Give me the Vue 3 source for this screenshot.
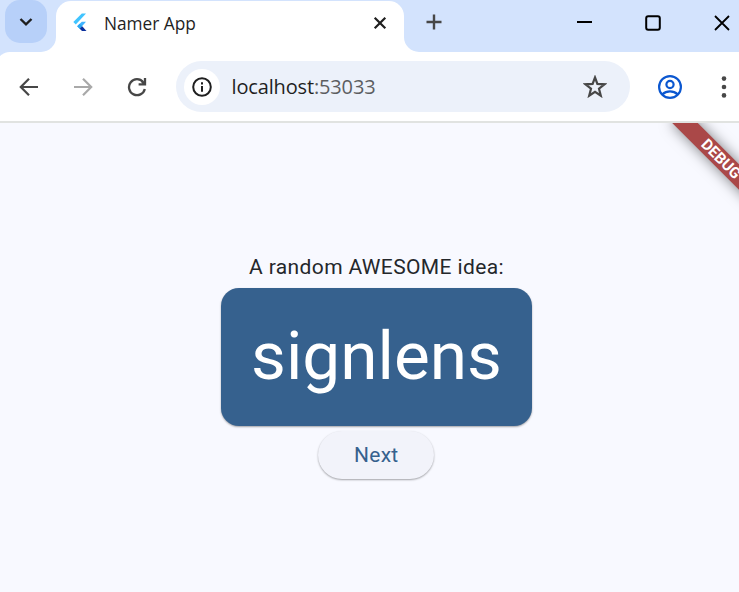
<script setup>
import { ref } from 'vue'

const words = ['signlens', 'bluefox', 'newstone']
const index = ref(0)
const next = () => {
  index.value = (index.value + 1) % words.length
}
</script>

<template>
  <div class="window">
    <header class="tabstrip">
      <div class="search-cell">
        <button class="tab-search" aria-label="Search tabs">
          <svg width="14" height="10" viewBox="0 0 14 10"><path d="M1.5 2 7 7.3 12.5 2" fill="none" stroke="#1f1f1f" stroke-width="2.4" /></svg>
        </button>
      </div>
      <div class="tab">
        <svg class="favicon" width="15" height="19" viewBox="0 0 15 19">
          <path d="M13 .5H8.8L.3 9l2.5 2.6z" fill="#40c4ff" />
          <path d="M13 8.7H8.8L4.2 13.2l2.5 2.6z" fill="#40b4ff" />
          <path d="m4.2 13.2 2.5-2.4 2.5 2.4-2.5 2.5z" fill="#29a6f2" />
          <path d="m6.7 15.7 2.5-2.5 4.3 4.8H9z" fill="#0a2f9c" />
        </svg>
        <span class="tab-title">Namer App</span>
        <svg class="tab-close" width="14" height="14" viewBox="0 0 14 14"><path d="m1.7 1.7 10.6 10.6M12.3 1.7 1.7 12.3" stroke="#1f1f1f" stroke-width="2.2" /></svg>
      </div>
      <div class="strip-rest">
        <svg class="new-tab" width="16" height="16" viewBox="0 0 16 16"><path d="M8 .5v15M.5 8h15" stroke="#474747" stroke-width="2.4" /></svg>
        <svg class="minimize" width="15" height="2"><path d="M0 1h15" stroke="#000" stroke-width="2" /></svg>
        <svg class="maximize" width="16" height="16"><rect x="1.2" y="1.2" width="13.6" height="13.6" rx="2" fill="none" stroke="#000" stroke-width="2" /></svg>
        <svg class="close" width="16" height="16"><path d="m1 1 14 14M15 1 1 15" stroke="#000" stroke-width="1.8" /></svg>
      </div>
    </header>

    <nav class="toolbar">
      <svg class="back" width="20" height="20" viewBox="0 0 20 20"><path d="M19 10H2.5M10 1.7 1.8 10l8.2 8.3" fill="none" stroke="#474747" stroke-width="2.2" /></svg>
      <svg class="forward" width="20" height="20" viewBox="0 0 20 20"><path d="M1 10h16.5M10 1.7l8.2 8.3-8.2 8.3" fill="none" stroke="#a9a9a9" stroke-width="2.2" /></svg>
      <svg class="reload" width="20" height="20" viewBox="0 0 20 20">
        <path d="M16.2 5.1A8 8 0 1 0 17.8 12" fill="none" stroke="#474747" stroke-width="2.3" />
        <path d="M18 1v6.4h-6.4M17.6 7l-2.8-2.8" fill="none" stroke="#474747" stroke-width="2.3" />
      </svg>
      <div class="omnibox">
        <span class="site-info">
          <svg width="20" height="20" viewBox="0 0 20 20"><circle cx="10" cy="10" r="8.8" fill="none" stroke="#1f1f1f" stroke-width="2" /><path d="M10 9v5.8M10 5.3v2.1" stroke="#1f1f1f" stroke-width="2" /></svg>
        </span>
        <span class="url">localhost<span class="port">:53033</span></span>
        <svg class="star" width="24" height="23" viewBox="0 0 24 23"><path d="m12 2.5 2.4 6.4 7.1.4-5.5 4.4 1.8 7-5.8-3.9-5.8 3.9 1.8-7-5.5-4.4 7.1-.4z" fill="none" stroke="#474747" stroke-width="2.2" /></svg>
      </div>
      <svg class="profile" width="26" height="26" viewBox="0 0 26 26" fill="none" stroke="#0b57d0" stroke-width="2.2"><circle cx="13" cy="13" r="10.9" /><circle cx="13" cy="10.5" r="3.6" /><path d="M5.3 20.4c4.3-4 11.1-4 15.4 0" /></svg>
      <svg class="menu" width="6" height="22" viewBox="0 0 6 22" fill="#474747"><circle cx="3" cy="2.6" r="2.3" /><circle cx="3" cy="11" r="2.3" /><circle cx="3" cy="19.4" r="2.3" /></svg>
    </nav>

    <main class="page">
      <p class="caption">A random AWESOME idea:</p>
      <div class="card">{{ words[index] }}</div>
      <button class="next" @click="next">Next</button>
      <div class="banner">DEBUG</div>
    </main>
  </div>
</template>

<style>
body {
  margin: 0;
  overflow: hidden;
}
</style>

<style scoped>
* {
  box-sizing: border-box;
}
svg {
  display: block;
  flex: none;
}
button {
  border: 0;
  padding: 0;
}
.window {
  width: 739px;
  height: 592px;
  display: flex;
  flex-direction: column;
  overflow: hidden;
  background: #fff;
}
.tabstrip {
  height: 61px;
  flex: none;
  display: flex;
  background:
    radial-gradient(circle at 10px 14px, #fff 13.5px, #d3e3fd 14.5px) 0 52px / 10px 9px no-repeat,
    linear-gradient(#d3e3fd 26px, #fff 26px);
}
.search-cell {
  width: 56px;
  height: 52px;
  padding-left: 5px;
  background: #d3e3fd;
  border-bottom-right-radius: 15px;
}
.tab-search {
  width: 42px;
  height: 43px;
  display: grid;
  place-items: center;
  border-radius: 15px;
  background: #b7d0f9;
}
.tab {
  width: 348px;
  height: 52px;
  margin-top: 1px;
  padding: 0 17px 8px;
  display: flex;
  align-items: center;
  border-radius: 15px 15px 0 0;
  background: #fff;
}
.favicon {
  margin-top: -1px;
}
.tab-title {
  flex: 1;
  margin: 1px 0 0 16px;
  font: 17.3px/24px 'Open Sans', sans-serif;
  letter-spacing: -0.02px;
  color: #1f1f1f;
}
.tab-close {
  margin-top: -1px;
}
.strip-rest {
  width: 335px;
  height: 52px;
  display: flex;
  align-items: center;
  padding: 0 0 8px 22px;
  background: #d3e3fd;
  border-bottom-left-radius: 15px;
}
.minimize {
  margin-left: 135px;
}
.maximize,
.close {
  margin: 2px 0 0 53px;
}
.toolbar {
  height: 60px;
  flex: none;
  display: flex;
  align-items: center;
  padding: 0 0 9px 19px;
}
.forward {
  margin-left: 34px;
}
.reload {
  margin-left: 34px;
}
.omnibox {
  width: 454px;
  height: 51px;
  margin-left: 29px;
  padding: 0 23px 0 8px;
  display: flex;
  align-items: center;
  border-radius: 26px;
  background: #ecf1fa;
}
.site-info {
  width: 36px;
  height: 36px;
  display: grid;
  place-items: center;
  border-radius: 50%;
  background: #fff;
}
.url {
  flex: 1;
  margin-left: 11.5px;
  font: 20px/28px 'Open Sans', sans-serif;
  letter-spacing: -0.15px;
  color: #1f1f1f;
}
.port {
  color: #5c5e61;
}
.profile {
  margin-left: 27px;
}
.menu {
  margin-left: 38px;
}
.page {
  position: relative;
  flex: 1;
  display: flex;
  flex-direction: column;
  align-items: center;
  padding-top: 130px;
  border-top: 2px solid #e1e3e1;
  background: #f8f9ff;
  overflow: hidden;
  font-family: Roboto, sans-serif;
}
.caption {
  margin: 0 0 5.5px 14px;
  font-size: 21px;
  line-height: 29px;
  letter-spacing: 0.375px;
  color: #24272b;
  white-space: nowrap;
}
.card {
  height: 138px;
  margin-left: 14px;
  padding: 29px 30px;
  border-radius: 18px;
  background: #36618e;
  box-shadow: 0 1px 2px rgba(0, 0, 0, 0.35);
  color: #fff;
  font-size: 67.5px;
  line-height: 78px;
}
.next {
  width: 116px;
  height: 48px;
  margin: 5.5px 0 0 13.5px;
  border-radius: 24px;
  background: #f2f3fa;
  box-shadow: 0 1px 2px rgba(0, 0, 0, 0.35);
  color: #36618e;
  font: 400 21px Roboto, sans-serif;
  letter-spacing: 0.3px;
}
.banner {
  position: absolute;
  left: 661px;
  top: 27px;
  width: 120px;
  height: 18px;
  transform: rotate(45deg);
  background: #aa4848;
  box-shadow: 0 0 14px rgba(0, 0, 0, 0.5);
  color: #fff;
  font-size: 15.3px;
  font-weight: 700;
  line-height: 18px;
  text-align: center;
}
</style>
